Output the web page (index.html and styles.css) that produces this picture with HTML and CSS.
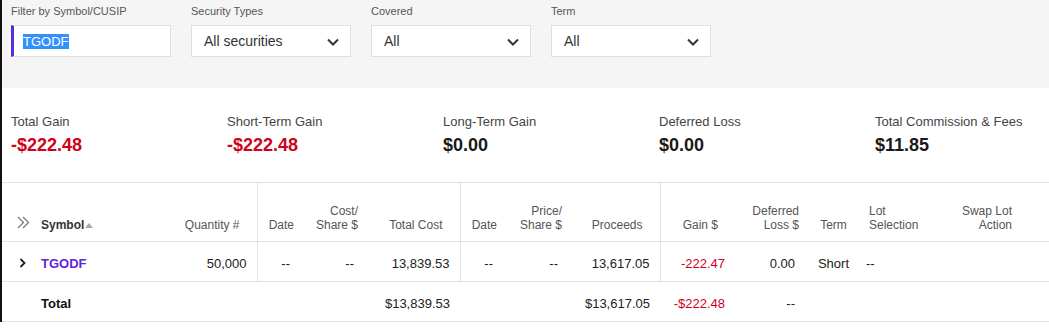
FILE: index.html
```html
<!DOCTYPE html>
<html lang="en">
<head>
    <meta charset="UTF-8">
    <title>Realized Gain/Loss</title>
    <link rel="stylesheet" href="styles.css">
</head>
<body>
    <div class="page">
        <div class="filters">
            <div class="filter">
                <div class="filter-label">Filter by Symbol/CUSIP</div>
                <div class="text-input"><span class="selected">TGODF</span></div>
            </div>
            <div class="filter">
                <div class="filter-label">Security Types</div>
                <div class="select">All securities
                    <svg class="caret" width="12" height="8" viewBox="0 0 12 8"><path d="M1 1.5l5 5 5-5" fill="none" stroke="#333" stroke-width="2"/></svg>
                </div>
            </div>
            <div class="filter">
                <div class="filter-label">Covered</div>
                <div class="select">All
                    <svg class="caret" width="12" height="8" viewBox="0 0 12 8"><path d="M1 1.5l5 5 5-5" fill="none" stroke="#333" stroke-width="2"/></svg>
                </div>
            </div>
            <div class="filter">
                <div class="filter-label">Term</div>
                <div class="select">All
                    <svg class="caret" width="12" height="8" viewBox="0 0 12 8"><path d="M1 1.5l5 5 5-5" fill="none" stroke="#333" stroke-width="2"/></svg>
                </div>
            </div>
        </div>

        <div class="summary">
            <div class="stat">
                <div class="stat-label">Total Gain</div>
                <div class="stat-value loss">-$222.48</div>
            </div>
            <div class="stat">
                <div class="stat-label">Short-Term Gain</div>
                <div class="stat-value loss">-$222.48</div>
            </div>
            <div class="stat">
                <div class="stat-label">Long-Term Gain</div>
                <div class="stat-value">$0.00</div>
            </div>
            <div class="stat">
                <div class="stat-label">Deferred Loss</div>
                <div class="stat-value">$0.00</div>
            </div>
            <div class="stat">
                <div class="stat-label">Total Commission &amp; Fees</div>
                <div class="stat-value">$11.85</div>
            </div>
        </div>

        <table class="lots">
            <colgroup>
                <col style="width:34px"><col style="width:104px"><col style="width:117px">
                <col style="width:43px"><col style="width:64px"><col style="width:96px">
                <col style="width:43px"><col style="width:65px"><col style="width:92px">
                <col style="width:75px"><col style="width:70px"><col style="width:57px">
                <col style="width:88px"><col style="width:99px">
            </colgroup>
            <thead>
                <tr>
                    <th class="expand">
                        <svg width="13" height="13" viewBox="0 0 13 13"><path d="M1 1l5.5 5.5L1 12M6 1l5.5 5.5L6 12" fill="none" stroke="#777" stroke-width="1.2"/></svg>
                    </th>
                    <th class="symbol">Symbol<span class="sort-up"></span></th>
                    <th class="num sortable sep">Quantity #</th>
                    <th class="num">Date</th>
                    <th class="num">Cost/<br>Share $</th>
                    <th class="num sortable sep">Total Cost</th>
                    <th class="num">Date</th>
                    <th class="num">Price/<br>Share $</th>
                    <th class="num sortable sep">Proceeds</th>
                    <th class="num sortable">Gain $</th>
                    <th class="num">Deferred<br>Loss $</th>
                    <th class="center">Term</th>
                    <th class="left">Lot<br>Selection</th>
                    <th class="num swap">Swap Lot<br>Action</th>
                </tr>
            </thead>
            <tbody>
                <tr class="lot-row">
                    <td class="expand">
                        <svg width="7" height="10" viewBox="0 0 7 10"><path d="M1.5 1l4 4-4 4" fill="none" stroke="#222" stroke-width="1.8"/></svg>
                    </td>
                    <td class="symbol"><span class="ticker">TGODF</span></td>
                    <td class="num sep">50,000</td>
                    <td class="num">--</td>
                    <td class="num">--</td>
                    <td class="num sep">13,839.53</td>
                    <td class="num">--</td>
                    <td class="num">--</td>
                    <td class="num sep">13,617.05</td>
                    <td class="num loss">-222.47</td>
                    <td class="num">0.00</td>
                    <td class="center">Short</td>
                    <td class="left">--</td>
                    <td></td>
                </tr>
                <tr class="total-row">
                    <td></td>
                    <td class="symbol"><strong>Total</strong></td>
                    <td></td>
                    <td></td>
                    <td></td>
                    <td class="num">$13,839.53</td>
                    <td></td>
                    <td></td>
                    <td class="num">$13,617.05</td>
                    <td class="num loss">-$222.48</td>
                    <td class="num">--</td>
                    <td></td>
                    <td></td>
                    <td></td>
                </tr>
            </tbody>
        </table>
    </div>
</body>
</html>
```

FILE: styles.css
```css
body {
    margin: 0;
    font-family: "Liberation Sans", Arial, sans-serif;
    color: #222;
    background-color: white;
    overflow: hidden;
}
.page {
    border-left: 2px solid #111;
}
.filters {
    display: flex;
    gap: 20px;
    padding: 4px 0 31px 9px;
    background-color: #f5f5f5;
}
.filter {
    width: 160px;
}
.filter-label {
    font-size: 11px;
    line-height: 14px;
    color: #555;
    margin-bottom: 7px;
}
.text-input, .select {
    box-sizing: border-box;
    height: 32px;
    background-color: white;
    border: 1px solid #dedede;
    font-size: 14px;
    display: flex;
    align-items: center;
}
.text-input {
    border-left: 3px solid #5b2be0;
}
.selected {
    background-color: #3390ff;
    color: white;
    font-size: 13px;
    line-height: 15px;
    margin: 1px 0 0 9px;
}
.select {
    justify-content: space-between;
    padding: 0 11px 0 12px;
    color: #333;
}
.caret {
    margin-top: 1px;
}
.summary {
    display: flex;
    padding: 26px 0 26px 9px;
}
.stat {
    flex: 0 0 216px;
}
.stat:last-child {
    flex: 1 1 auto;
    min-width: 0;
    white-space: nowrap;
}
.stat-label {
    font-size: 13px;
    line-height: 16px;
    color: #444;
}
.stat-value {
    font-size: 18px;
    line-height: 22px;
    font-weight: bold;
    color: #1a1a1a;
    margin-top: 4px;
}
.loss {
    color: #d0021b !important;
}
.lots {
    width: 1047px;
    table-layout: fixed;
    border-collapse: collapse;
    border-top: 1px solid #e2e2e2;
}
.lots th {
    height: 49px;
    padding: 0 6px 9px 0;
    vertical-align: bottom;
    font-size: 12px;
    line-height: 14px;
    font-weight: normal;
    color: #555;
    border-bottom: 1px solid #e2e2e2;
}
.lots td {
    padding: 14px 6px 9px 0;
    font-size: 13px;
    line-height: 16px;
    color: #222;
    border-bottom: 1px solid #e2e2e2;
    white-space: nowrap;
}
.lots .num {
    text-align: right;
}
.lots .center {
    text-align: center;
    padding-right: 0;
}
.lots .left {
    text-align: left;
}
.lots th.left {
    padding-left: 7px;
}
.lots td.left {
    padding-left: 4px;
}
.lots th.sortable {
    padding-right: 17px;
}
.lots td.num {
    padding-right: 10px;
}
.lots th.swap {
    padding-right: 37px;
}
.lots th.sep, .lot-row td.sep {
    border-right: 1px solid #e2e2e2;
}
.lots .expand {
    padding: 0 0 9px 15px;
    text-align: left;
}
.lot-row td.expand {
    padding: 14px 0 9px 17px;
}
.lots th.symbol {
    text-align: left;
    padding-left: 5px;
    font-weight: bold;
    color: #333;
}
.lots td.symbol {
    padding-left: 5px;
}
.sort-up {
    display: inline-block;
    width: 0;
    height: 0;
    border-left: 4px solid transparent;
    border-right: 4px solid transparent;
    border-bottom: 5px solid #aaa;
    margin-left: 1px;
    vertical-align: 1px;
}
.ticker {
    color: #6322dc;
    font-weight: bold;
}
.total-row strong {
    color: #111;
}
```
